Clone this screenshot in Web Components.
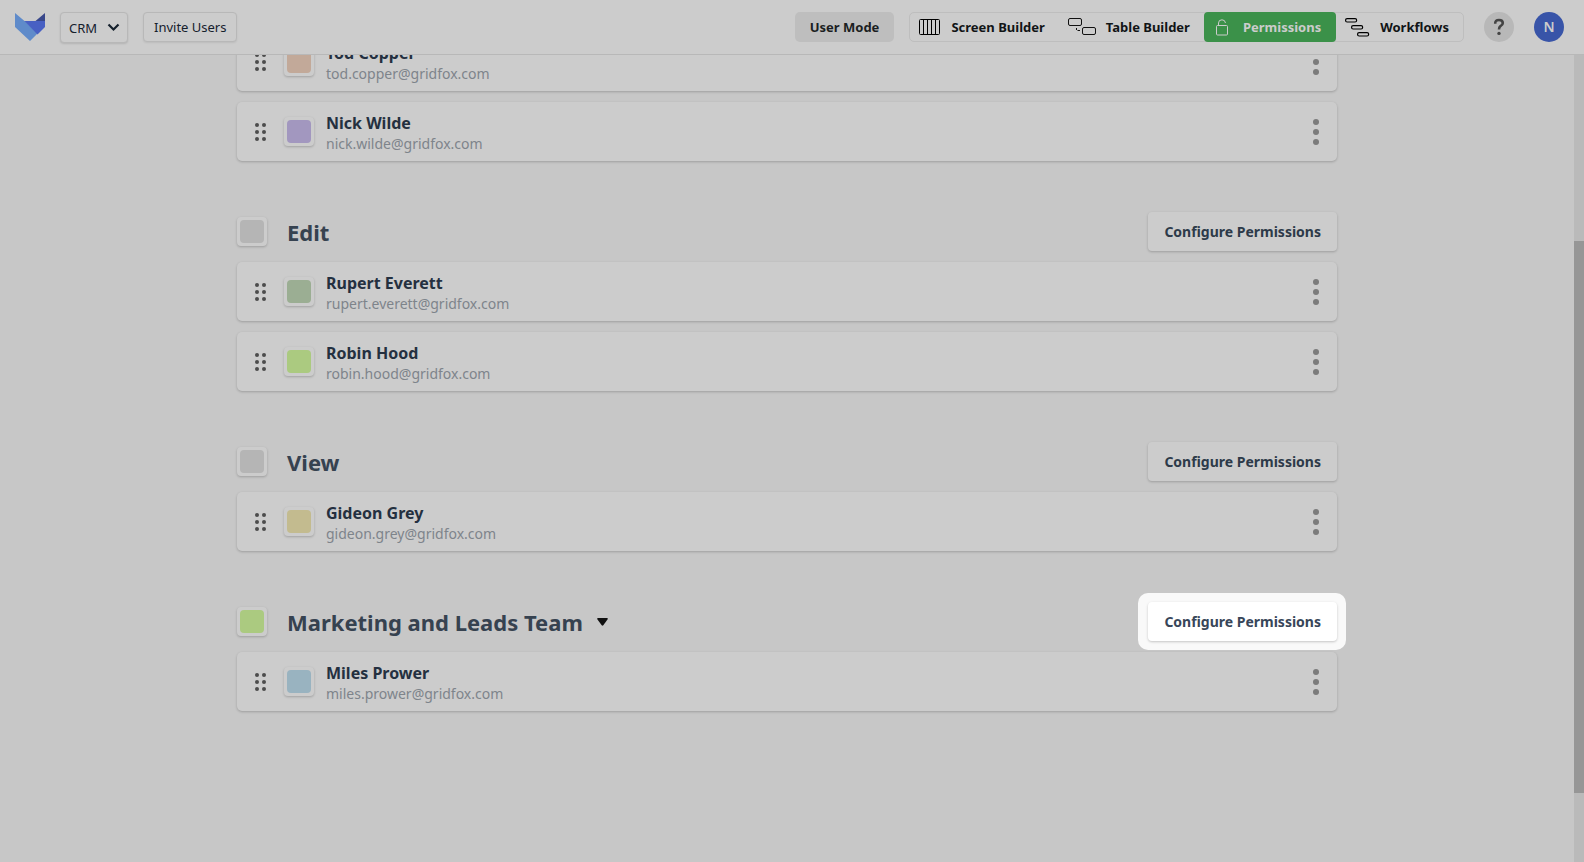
<!DOCTYPE html>
<html lang="en">
<head>
<meta charset="utf-8">
<title>Gridfox – Permissions</title>
<style>
  :root {
    --page: #c7c7c7;
    --surface: #cccccc;
    --line: #b8b8b8;
    --ink: #15202c;
    --ink-strong: #243040;
    --heading: #364250;
    --muted: #7e848b;
    --shadow: 0 1px 3px rgba(0,0,0,.14), 0 1px 2px rgba(0,0,0,.08);
  }
  body { margin: 0; background: var(--page); color: var(--ink); font: 14px/20px "Noto Sans", sans-serif; }
</style>
</head>
<body>
<permissions-app></permissions-app>
<script>
const define = (name, html, setup) => {
  const template = document.createElement('template');
  template.innerHTML = html;
  customElements.define(name, class extends HTMLElement {
    connectedCallback() {
      if (this.shadowRoot) return;
      const content = template.content.cloneNode(true);
      if (setup) setup(this, content);
      this.attachShadow({ mode: 'open' }).append(content);
    }
  });
};

define('brand-logo', `
<style>:host{display:block;width:30px;height:28px} svg{display:block}</style>
<svg width="30" height="28" viewBox="0 0 30 28" role="img" aria-label="Gridfox">
  <path d="M0 0 L9.500 8 H10 L22.500 20.500 L15 28 L0 14Z" fill="#5f8bca"/>
  <path d="M9.500 8 H30 V14 L22.500 21.500Z" fill="#4860c3"/>
  <path d="M30 0 V8 H20.500Z" fill="#38478a"/>
</svg>`);

define('app-picker', `
<style>
  :host{display:grid;width:68px;height:31px}
  select,svg{grid-area:1/1}
  select{appearance:none;box-sizing:border-box;width:100%;height:100%;padding:0 0 0 8px;margin:0;border:1px solid var(--line);border-radius:4px;background:var(--surface);color:var(--ink);font:inherit;font-size:13px;box-shadow:0 1px 2px rgba(0,0,0,.12)}
  svg{place-self:center end;margin-right:8px;pointer-events:none}
</style>
<select aria-label="Application"><option>CRM</option></select>
<svg width="13" height="9" viewBox="0 0 13 9" fill="none" stroke="#15202c" stroke-width="2.200"><path d="M1.500 1.500 6.500 6.500 11.500 1.500"/></svg>`);

define('plain-button', `
<style>
  :host{display:block}
  button{height:30px;padding:0 10px;border:1px solid var(--line);border-radius:4px;background:var(--surface);color:var(--ink);font:inherit;font-size:13px;box-shadow:0 1px 2px rgba(0,0,0,.08);box-sizing:border-box}
  :host([filled]) button{padding:0 15px;border:0;border-radius:5px;background:#bebebe;color:#1b1e22;box-shadow:none;font-weight:700}
</style>
<button type="button"><slot></slot></button>`);

define('nav-tab', `
<style>
  :host{display:block}
  a{display:flex;align-items:center;height:28px;padding:0 14px 0 9px;gap:10px;color:#111416;font-size:13px;font-weight:700;text-decoration:none;white-space:nowrap}
  :host([active]) a{height:30px;margin:-1px 0;padding:0 15px 0 12px;gap:14px;border-radius:4px;background:#3b9149;color:var(--surface)}
  ::slotted(svg){display:block;flex:none}
</style>
<a href="#"><slot name="icon"></slot><slot></slot></a>`, (host, root) => {
  if (host.hasAttribute('active')) root.querySelector('a').setAttribute('aria-current', 'page');
});

define('builder-nav', `
<style>
  :host{display:block}
  nav{display:flex;border:1px solid #bebebe;border-radius:5px}
</style>
<nav aria-label="Builder">
  <nav-tab><svg slot="icon" width="22" height="16" viewBox="0 0 22 16" fill="none" stroke="#000" stroke-width="1"><rect x=".5" y=".5" width="20" height="15" rx="1"/><path d="M4.500 0V16M8.500 0V16M12.500 0V16M16.500 0V16"/></svg>Screen Builder</nav-tab>
  <nav-tab><svg slot="icon" width="28" height="18" viewBox="0 0 28 18" fill="none" stroke="#111" stroke-width="1"><rect x=".5" y=".5" width="13" height="7" rx="1.500"/><rect x="14.500" y="9.500" width="13" height="7" rx="1.500"/><path d="M8.500 10v2M9.500 12.500h2.500"/></svg>Table Builder</nav-tab>
  <nav-tab active><svg slot="icon" width="13" height="17" viewBox="0 0 13 17" fill="none" stroke="#ccc" stroke-width="1"><rect x=".5" y="6.500" width="11" height="9.500" rx="1"/><path d="M2.500 6.500V4Q2.500 .8 6 .8Q9 .8 9.500 4"/></svg>Permissions</nav-tab>
  <nav-tab><svg slot="icon" width="25" height="19" viewBox="0 0 25 19" fill="none" stroke="#000" stroke-width="1.200"><rect x=".6" y=".6" width="11" height="3.400" rx="1.500"/><rect x="6.600" y="7.600" width="11" height="3.400" rx="1.500"/><rect x="12.600" y="14.600" width="11" height="3.400" rx="1.500"/></svg>Workflows</nav-tab>
</nav>`);

define('round-button', `
<style>
  :host{display:block}
  button{display:grid;place-items:center;width:30px;height:30px;padding:0;border:0;border-radius:50%;background:#b8b8b8;color:#444;font:inherit;font-weight:600}
  :host([avatar]) button{background:#3854a8;color:#ccc}
</style>
<button type="button"><slot></slot></button>`, (host, root) => {
  root.querySelector('button').setAttribute('aria-label', host.getAttribute('label'));
});

define('top-bar', `
<style>
  :host{display:block}
  header{display:flex;align-items:flex-start;box-sizing:border-box;height:55px;padding:12px 20px 0 15px;border-bottom:1px solid var(--line);background:var(--surface)}
  brand-logo{margin:1px 15px 0 0}
  app-picker{margin-right:15px}
  .end{display:flex;margin-left:auto}
  builder-nav{margin:0 20px 0 15px}
  .help{margin-right:20px}
</style>
<header>
  <brand-logo></brand-logo>
  <app-picker></app-picker>
  <plain-button>Invite Users</plain-button>
  <div class="end">
    <plain-button filled>User Mode</plain-button>
    <builder-nav></builder-nav>
    <round-button class="help" label="Help"><svg width="12" height="18" viewBox="0 0 12 18"><path d="M2.200 5.800Q2 2 6 2Q9.800 2 9.800 5Q9.800 7 7.500 8.200Q6 9.200 6 11.500" fill="none" stroke="#444" stroke-width="2.600"/><circle cx="6" cy="15.400" r="1.700" fill="#444"/></svg></round-button>
    <round-button avatar label="N">N</round-button>
  </div>
</header>`);

define('color-swatch', `
<style>
  :host{display:block;flex:none}
  button{display:block;box-sizing:border-box;width:30px;height:29px;padding:0;border:3px solid var(--surface);border-radius:4px;background:var(--surface);box-shadow:var(--shadow)}
  span{display:block;height:23px;border-radius:4px;background:var(--swatch)}
</style>
<button type="button" aria-label="Change colour"><span></span></button>`, (host, root) => {
  root.querySelector('span').style.setProperty('--swatch', host.getAttribute('color'));
});

define('user-card', `
<style>
  :host{display:flex;align-items:center;height:59px;padding:0 12px 0 18px;border-radius:5px;background:var(--surface);box-shadow:var(--shadow);box-sizing:border-box}
  svg{display:block}
  .grip{margin-right:18px}
  .who{margin-left:12px;padding-top:2px;flex:1}
  .name{color:var(--ink-strong);font-size:16px;line-height:22px;font-weight:700}
  .mail{color:var(--muted);font-size:14px;line-height:20px}
  button{padding:6px;border:0;background:none}
</style>
<svg class="grip" width="11" height="18" viewBox="0 0 11 18" fill="#4c4c4c"><circle cx="2" cy="2" r="2"/><circle cx="9" cy="2" r="2"/><circle cx="2" cy="9" r="2"/><circle cx="9" cy="9" r="2"/><circle cx="2" cy="16" r="2"/><circle cx="9" cy="16" r="2"/></svg>
<color-swatch></color-swatch>
<div class="who"><div class="name"><slot name="name"></slot></div><div class="mail"><slot name="mail"></slot></div></div>
<button type="button" aria-label="More options"><svg width="6" height="26" viewBox="0 0 6 26" fill="#7b7b7b"><circle cx="3" cy="3" r="3"/><circle cx="3" cy="13" r="3"/><circle cx="3" cy="23" r="3"/></svg></button>`, (host, root) => {
  root.querySelector('color-swatch').setAttribute('color', host.getAttribute('color'));
});

define('configure-button', `
<style>
  :host{display:block;position:relative;margin-left:auto}
  button{position:relative;display:block;height:39px;padding:0 16px;border:0;border-radius:4px;background:var(--surface);color:#2d3a49;font:inherit;font-weight:700;box-shadow:var(--shadow)}
  :host([spotlight])::before{content:"";position:absolute;inset:-9px -9px -9px -10px;border-radius:10px;background:#f9f9f9}
  :host([spotlight]) button{background:#fff;color:#384659}
</style>
<button type="button">Configure Permissions</button>`);

define('user-group', `
<style>
  :host{display:flex;flex-direction:column;gap:11px}
  header{display:flex;align-items:center;height:39px}
  h2{margin:0 0 0 20px;color:var(--heading);font-size:22px;line-height:30px;font-weight:700}
  .caret{display:none;margin-left:14px;padding:0;border:0;background:none}
  :host([custom]) .caret{display:block}
  svg{display:block}
</style>
<header>
  <color-swatch></color-swatch>
  <h2></h2>
  <button class="caret" type="button" aria-label="Group options"><svg width="11" height="8" viewBox="0 0 11 8"><path d="M.800 0H10.200Q11.200.500 10.500 1.500L6.300 7.300Q5.500 8.200 4.700 7.300L.500 1.500Q-.200.500.800 0Z" fill="#111"/></svg></button>
  <configure-button></configure-button>
</header>
<slot></slot>`, (host, root) => {
  if (host.hasAttribute('continued')) {
    root.querySelector('header').remove();
    return;
  }
  root.querySelector('h2').textContent = host.getAttribute('heading');
  root.querySelector('color-swatch').setAttribute('color', host.getAttribute('color'));
  root.querySelector('configure-button').toggleAttribute('spotlight', host.hasAttribute('spotlight'));
});

define('page-scrollbar', `
<style>
  :host{display:grid;flex:none;width:10px;grid-template-rows:186fr 552fr 69fr;background:#bababa}
  i{grid-row:2;background:#969696}
</style><i></i>`);

define('permissions-app', `
<style>
  :host{display:flex;flex-direction:column;height:100vh}
  .body{display:flex;flex:1;min-height:0}
  main{flex:1;overflow:hidden}
  .list{display:flex;flex-direction:column;gap:51px;max-width:1100px;margin:-23px auto 0}
</style>
<top-bar></top-bar>
<div class="body">
  <main><div class="list">
    <user-group continued>
      <user-card color="#c2a999"><span slot="name">Tod Copper</span><span slot="mail">tod.copper@gridfox.com</span></user-card>
      <user-card color="#a297bf"><span slot="name">Nick Wilde</span><span slot="mail">nick.wilde@gridfox.com</span></user-card>
    </user-group>
    <user-group heading="Edit" color="#b5b5b5">
      <user-card color="#9bae93"><span slot="name">Rupert Everett</span><span slot="mail">rupert.everett@gridfox.com</span></user-card>
      <user-card color="#abca80"><span slot="name">Robin Hood</span><span slot="mail">robin.hood@gridfox.com</span></user-card>
    </user-group>
    <user-group heading="View" color="#b5b5b5">
      <user-card color="#c3bb8f"><span slot="name">Gideon Grey</span><span slot="mail">gideon.grey@gridfox.com</span></user-card>
    </user-group>
    <user-group heading="Marketing and Leads Team" color="#abca80" custom spotlight>
      <user-card color="#99b3c0"><span slot="name">Miles Prower</span><span slot="mail">miles.prower@gridfox.com</span></user-card>
    </user-group>
  </div></main>
  <page-scrollbar></page-scrollbar>
</div>`);
</script>
</body>
</html>
